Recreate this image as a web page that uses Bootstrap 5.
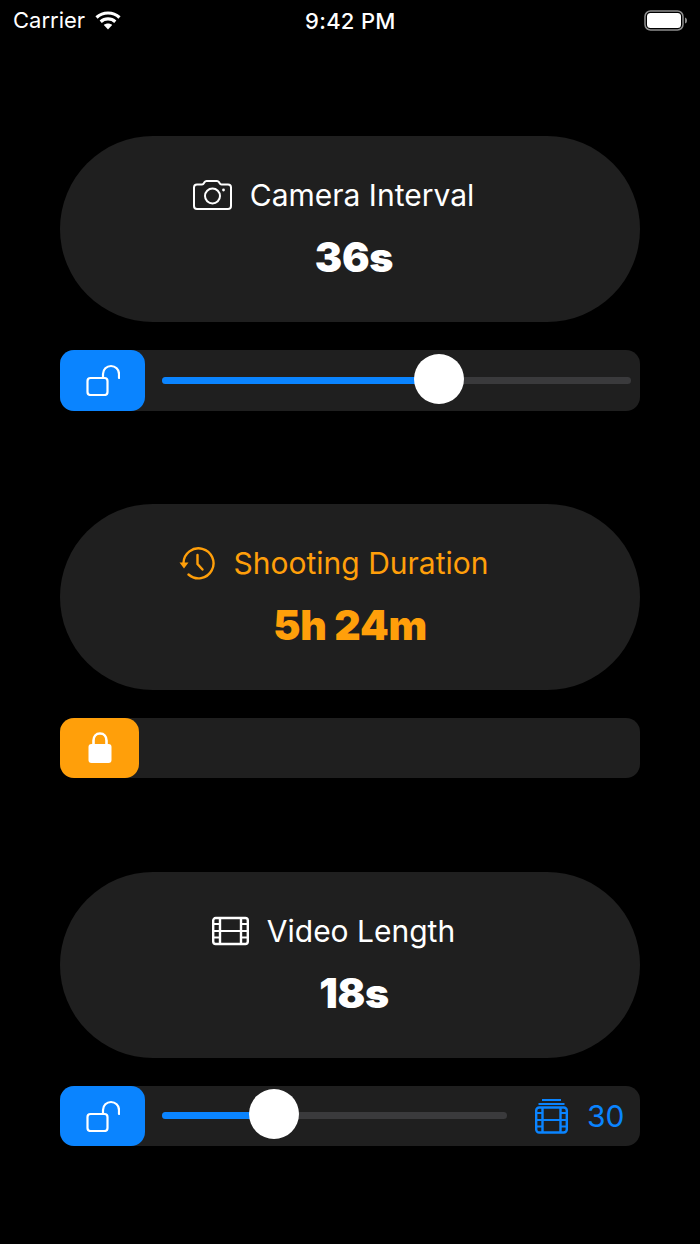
<!DOCTYPE html>
<html lang="en">
  <head>
    <meta charset="UTF-8" />
    <meta name="viewport" content="width=device-width, initial-scale=1.0" />
    <title>Timelapse</title>
    <link href="https://cdn.jsdelivr.net/npm/bootstrap@5.3.0/dist/css/bootstrap.min.css" rel="stylesheet" />
    <style>
      body { background: #000; color: #fff; font-family: Inter, "Liberation Sans", sans-serif; height: 1244px; overflow: hidden; }
      .status-bar { height: 40px; padding: 0 12px 0 13px; font-size: 22px; }
      .status-time { left: 305px; top: 5px; font-weight: 500; letter-spacing: 0.3px; }
      .carrier { gap: 10px; }
      .page-wrap { padding: 96px 60px 0; }
      .info-pill { height: 186px; border-radius: 93px; background: #1f1f1f; padding-top: 39px; }
      .info-label { font-size: 30px; line-height: 40px; height: 40px; padding-right: 33px; gap: 18px; }
      .info-value { font-size: 41px; line-height: 46px; font-weight: 900; margin-top: 19px; padding-left: 8px; letter-spacing: -0.3px; }
      .info-value.no-shift { padding-left: 0; }
      .tone-orange { color: #ff9f0a; }
      .control-row { height: 60.5px; margin-top: 28px; border-radius: 14px; background: #1f1f1f; }
      .section-gap { margin-top: 93px; }
      .section-gap-last { margin-top: 93.5px; }
      .lock-btn { width: 85px; height: 100%; background: #0a84ff; border-radius: 14px; }
      .lock-btn.is-locked { width: 79px; background: #ff9f0a; }
      .track-area { margin-left: 17px; margin-right: 9px; height: 7px; background: #3a3a3c; border-radius: 4px; }
      .track-short { margin-right: 0; flex: 0 0 345px !important; }
      .track-fill { height: 100%; background: #0a84ff; border-radius: 4px; }
      .track-thumb { top: calc(50% - 1.5px); width: 50px; height: 50px; border-radius: 50%; background: #fff; transform: translate(-50%, -50%); }
      .frame-count { color: #0a84ff; font-size: 30px; line-height: 1; margin-left: 28px; gap: 19px; }
    </style>
  </head>
  <body>
    <!-- Status bar -->
    <div class="status-bar position-relative d-flex align-items-center justify-content-between">
      <div class="d-flex align-items-center carrier">
        <span>Carrier</span>
        <svg width="26" height="20" viewBox="0 0 26 20" fill="none" stroke="#fff" stroke-width="3.2">
          <path d="M1.5 7.5C8 1.5 18 1.5 24.500 7.500" />
          <path d="M5.700 11.700C9.800 8 16.200 8 20.300 11.700" />
          <path d="M13 19.500L8.800 15C11 13 15 13 17.200 15Z" fill="#fff" stroke="none" />
        </svg>
      </div>
      <span class="status-time position-absolute">9:42 PM</span>
      <svg width="44" height="22" viewBox="0 0 44 22">
        <rect x="1" y="2" width="38" height="19" rx="5.500" fill="none" stroke="#8e8e8e" stroke-width="1.500" />
        <rect x="3" y="4" width="34" height="15" rx="3.500" fill="#fff" />
        <path d="M41 8.500C42.500 9 43 10 43 11.500C43 13 42.500 14 41 14.500Z" fill="#8e8e8e" />
      </svg>
    </div>

    <main class="page-wrap">
      <!-- Camera interval -->
      <section class="info-pill d-flex flex-column align-items-center">
        <div class="info-label d-flex align-items-center">
          <svg width="39" height="30" viewBox="0 0 39 30" fill="none" stroke="#fff" stroke-width="2" stroke-linejoin="round">
            <path d="M4 4.500H9C10 4.500 10.500 4 11 3L11.500 2.200C12 1.500 12.500 1 13.500 1H24C25 1 25.500 1.500 26 2.200L26.500 3C27 4 27.500 4.500 28.500 4.500H35C36.700 4.500 38 5.800 38 7.500V26C38 27.700 36.700 29 35 29H4C2.300 29 1 27.700 1 26V7.500C1 5.800 2.300 4.500 4 4.500Z" />
            <circle cx="19.500" cy="16" r="7.500" />
            <circle cx="30.500" cy="10" r="1.400" fill="#fff" stroke="none" />
          </svg>
          <span>Camera Interval</span>
        </div>
        <div class="info-value">36s</div>
      </section>
      <div class="control-row d-flex align-items-center">
        <div class="lock-btn d-flex align-items-center justify-content-center flex-shrink-0">
          <svg width="34" height="32" viewBox="0 0 34 32" fill="none" stroke="#fff" stroke-width="2.200" stroke-linecap="round">
            <rect x="1.500" y="14" width="20" height="17" rx="3" />
            <path d="M17 13V10A8 8 0 0 1 33 10V14" />
          </svg>
        </div>
        <div class="track-area flex-grow-1 position-relative">
          <div class="track-fill" style="width: 59%"></div>
          <div class="track-thumb position-absolute" style="left: 59%"></div>
        </div>
      </div>

      <!-- Shooting duration -->
      <section class="info-pill section-gap tone-orange d-flex flex-column align-items-center">
        <div class="info-label d-flex align-items-center">
          <svg width="37" height="34" viewBox="0 0 37 34" fill="none" stroke="#ff9f0a" stroke-width="2.400" stroke-linecap="round">
            <path d="M4.500 17A15 15 0 1 1 9.500 28.500" />
            <path d="M0.500 16.500H9.500L5 22.500Z" fill="#ff9f0a" stroke="none" />
            <path d="M18.500 9V18L23.500 23.500" />
          </svg>
          <span>Shooting Duration</span>
        </div>
        <div class="info-value no-shift">5h 24m</div>
      </section>
      <div class="control-row d-flex align-items-center">
        <div class="lock-btn is-locked d-flex align-items-center justify-content-center flex-shrink-0">
          <svg width="24" height="32" viewBox="0 0 24 32" fill="none">
            <path d="M5.500 14V8.500C5.500 4.500 8 1.500 12 1.500C16 1.500 18.500 4.500 18.500 8.500V14" stroke="#fff" stroke-width="2.600" />
            <rect x="0.500" y="12" width="23" height="19" rx="3" fill="#fff" />
          </svg>
        </div>
      </div>

      <!-- Video length -->
      <section class="info-pill section-gap-last d-flex flex-column align-items-center">
        <div class="info-label d-flex align-items-center">
          <svg width="37" height="30" viewBox="0 0 37 30" fill="none" stroke="#fff" stroke-width="2.400">
            <rect x="1.200" y="2" width="34.600" height="26" rx="2.500" />
            <path d="M8 2V28M29 2V28" />
            <path d="M8 15H29" stroke-width="2" />
            <path d="M1 8H8M1 15H8M1 21.500H8M29 8H36M29 15H36M29 21.500H36" stroke-width="1.800" />
          </svg>
          <span>Video Length</span>
        </div>
        <div class="info-value">18s</div>
      </section>
      <div class="control-row d-flex align-items-center">
        <div class="lock-btn d-flex align-items-center justify-content-center flex-shrink-0">
          <svg width="34" height="32" viewBox="0 0 34 32" fill="none" stroke="#fff" stroke-width="2.200" stroke-linecap="round">
            <rect x="1.500" y="14" width="20" height="17" rx="3" />
            <path d="M17 13V10A8 8 0 0 1 33 10V14" />
          </svg>
        </div>
        <div class="track-area track-short position-relative">
          <div class="track-fill" style="width: 32.500%"></div>
          <div class="track-thumb position-absolute" style="left: 32.500%"></div>
        </div>
        <div class="frame-count d-flex align-items-center">
          <svg width="33" height="36" viewBox="0 0 33 36" fill="none" stroke="#0a84ff" stroke-width="2.400">
            <path d="M7 2H26M3.500 6H29.500" stroke-width="2" />
            <rect x="1.200" y="9.500" width="30.600" height="25" rx="3" />
            <path d="M7.500 9.500V34.500M25.500 9.500V34.500" />
            <path d="M7.500 22H25.500" stroke-width="2" />
            <path d="M1 15H7.500M1 22H7.500M1 28.500H7.500M25.500 15H32M25.500 22H32M25.500 28.500H32" stroke-width="1.800" />
          </svg>
          <span>30</span>
        </div>
      </div>
    </main>
    <script src="https://cdn.jsdelivr.net/npm/bootstrap@5.3.0/dist/js/bootstrap.bundle.min.js"></script>
  </body>
</html>
